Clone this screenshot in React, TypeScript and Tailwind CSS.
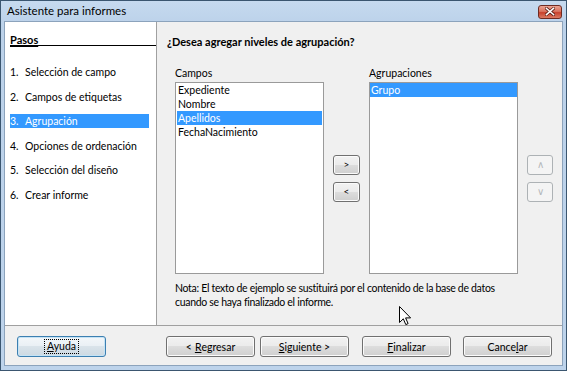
import React from "react";

const btn =
  "h-[21px] w-[89px] rounded-[3px] border border-[#707070] bg-[linear-gradient(to_bottom,#f2f2f2_0%,#ebebeb_50%,#dddddd_50%,#cfcfcf_100%)] shadow-[inset_0_0_0_1px_#fbfbfb] flex items-center justify-center text-[10.5px] leading-[14px] text-black";

const smallBtn =
  "h-[20px] w-full rounded-[3px] border border-[#707070] bg-[linear-gradient(to_bottom,#f2f2f2_0%,#ebebeb_50%,#dddddd_50%,#cfcfcf_100%)] shadow-[inset_0_0_0_1px_#fbfbfb] flex items-center justify-center text-[10px] text-black";

const disabledBtn =
  "h-[20px] w-full rounded-[3px] border border-[#adb2b5] bg-[#f4f4f4] flex items-center justify-center text-[10px] text-[#b4b8bb]";

const steps = [
  "Selección de campo",
  "Campos de etiquetas",
  "Agrupación",
  "Opciones de ordenación",
  "Selección del diseño",
  "Crear informe",
];

const campos = ["Expediente", "Nombre", "Apellidos", "FechaNacimiento"];

export default function App() {
  return (
    <div className="relative w-[567px] h-[371px] overflow-hidden border border-[#3b5670] bg-[linear-gradient(to_bottom,#c6daef_0px,#bcd2ea_22px,#bdd3eb_100%)] flex flex-col font-['Lato',sans-serif] text-black">
      {/* Title bar */}
      <div className="h-[20px] flex items-center justify-between pl-[6px] pr-[4px]">
        <span className="text-[11.5px] leading-[14px] text-black">Asistente para informes</span>
        <div className="w-[24px] h-[14px] mt-[1px] rounded-[3px] border border-[#6e2b22] bg-[linear-gradient(to_bottom,#eba393_0%,#d9735f_45%,#c8412c_55%,#db7a63_100%)] flex items-center justify-center">
          <svg width="10" height="9" viewBox="0 0 10 9">
            <path d="M1.5 1.5 L8.5 7.5 M8.5 1.5 L1.5 7.5" stroke="#5a1d14" strokeWidth="3" strokeLinecap="square" />
            <path d="M1.5 1.5 L8.5 7.5 M8.5 1.5 L1.5 7.5" stroke="#ffffff" strokeWidth="1.6" strokeLinecap="square" />
          </svg>
        </div>
      </div>

      {/* Client area */}
      <div className="mx-[3px] mb-[4px] flex-1 flex flex-col border border-[#8ca3bc] bg-[#f0f0f0]">
        {/* Top section */}
        <div className="h-[304px] flex border-b border-[#a0a0a0]">
          {/* Left pane */}
          <div className="w-[152px] bg-white border-r border-[#a0a0a0] flex flex-col">
            <div className="mt-[11px] ml-[5px] h-[13px] leading-[13px] border-b border-black text-[11px] font-bold">
              <span className="underline underline-offset-[2px]">Pasos</span>
            </div>
            <div className="mt-[19px] flex flex-col gap-[10.6px]">
              {steps.map((s, i) => (
                <div
                  key={s}
                  className={
                    i === 2
                      ? "ml-[5px] w-[139px] h-[14px] flex items-center text-[10.5px] leading-[14px] bg-[#3399ff] text-white whitespace-nowrap"
                      : "ml-[5px] w-[139px] h-[14px] flex items-center text-[10.5px] leading-[14px] text-black whitespace-nowrap"
                  }
                >
                  <span className="w-[15px]">{i + 1}.</span>
                  <span>{s}</span>
                </div>
              ))}
            </div>
          </div>

          {/* Right pane */}
          <div className="flex-1 flex flex-col">
            <div className="mt-[13px] pl-[10px] h-[14px] leading-[14px] text-[11px] font-bold">
              ¿Desea agregar niveles de agrupación?
            </div>
            <div className="mt-[17px] pl-[18px] pr-[9px] flex items-end gap-[9px]">
              {/* Campos */}
              <div className="w-[149px] flex flex-col">
                <div className="h-[14px] leading-[14px] text-[10.5px]">Campos</div>
                <div className="mt-[2px] h-[192px] bg-white border border-[#9a9a9a] flex flex-col">
                  {campos.map((c, i) => (
                    <div
                      key={c}
                      className={
                        i === 2
                          ? "mx-[1px] h-[14px] leading-[14px] pl-[1px] text-[10.5px] bg-[#3399ff] text-white"
                          : "mx-[1px] h-[14px] leading-[14px] pl-[1px] text-[10.5px] text-black"
                      }
                    >
                      {c}
                    </div>
                  ))}
                </div>
              </div>

              {/* Move buttons */}
              <div className="w-[27px] h-[192px] flex flex-col justify-center gap-[7px]">
                <div className={smallBtn}>&gt;</div>
                <div className={smallBtn}>&lt;</div>
              </div>

              {/* Agrupaciones */}
              <div className="w-[149px] flex flex-col">
                <div className="h-[14px] leading-[14px] text-[10.5px]">Agrupaciones</div>
                <div className="mt-[2px] h-[192px] bg-white border border-[#9a9a9a] flex flex-col">
                  <div className="h-[14px] leading-[14px] pl-[1px] text-[10.5px] bg-[#3399ff] text-white">Grupo</div>
                </div>
              </div>

              {/* Up/down */}
              <div className="w-[26px] h-[192px] flex flex-col justify-center gap-[7px]">
                <div className={disabledBtn}>∧</div>
                <div className={disabledBtn}>∨</div>
              </div>
            </div>
            <div className="mt-[8px] pl-[18px] text-[10.5px] leading-[13.7px] tracking-[-0.3px]">
              Nota: El texto de ejemplo se sustituirá por el contenido de la base de datos
              <br />
              cuando se haya finalizado el informe.
            </div>
          </div>
        </div>

        {/* Bottom bar */}
        <div className="flex-1 flex items-start pt-[10px]">
          <div className="ml-[12px] h-[21px] w-[89px] rounded-[3px] border border-[#3c7fb1] bg-[linear-gradient(to_bottom,#f3f7fa_0%,#e9eff4_50%,#d9e3ea_50%,#cdd9e2_100%)] shadow-[inset_0_0_0_1px_#c5e3f5] flex items-center justify-center text-[10.5px] leading-[14px]">
            <span className="border border-dotted border-black px-[2px] leading-[13px]">
              <span className="underline">A</span>yuda
            </span>
          </div>
          <div className={"ml-[60px] " + btn}>
            &lt; <span className="underline ml-[3px]">R</span>egresar
          </div>
          <div className={"ml-[5px] " + btn}>
            <span className="underline">S</span>iguiente &gt;
          </div>
          <div className={"ml-[13px] " + btn}>
            <span className="underline">F</span>inalizar
          </div>
          <div className={"ml-[12px] " + btn}>
            Cance<span className="underline">l</span>ar
          </div>
        </div>
      </div>

      {/* Mouse cursor */}
      <svg className="absolute left-[398px] top-[305px]" width="13" height="20" viewBox="0 0 13 20">
        <path d="M0.5 0.5 L0.5 16.5 L4.3 12.8 L6.8 18.6 L9.1 17.6 L6.6 11.9 L11.6 11.9 Z" fill="white" stroke="black" strokeWidth="1" strokeLinejoin="miter" />
      </svg>
    </div>
  );
}
